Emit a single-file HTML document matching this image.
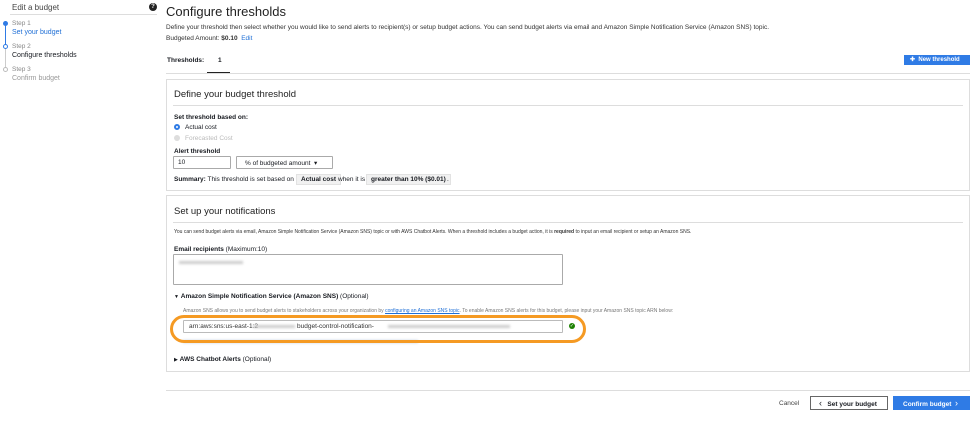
<!DOCTYPE html>
<html><head><style>
*{box-sizing:border-box;margin:0;padding:0}
body{width:977px;height:422px;background:#fff;font-family:"Liberation Sans",sans-serif;color:#16191f;position:relative;overflow:hidden}
.a{position:absolute;white-space:nowrap}
.s{font-size:6.5px}
.b{font-weight:bold}
.blue{color:#1f6fd6}
.grey{color:#888}
.panel{position:absolute;border:1px solid #ddd;background:#fff}
.rule{position:absolute;height:1px;background:#ddd}
.inp{position:absolute;border:1px solid #aaa;background:#fff;border-radius:1px}
.pill{position:absolute;background:#f1f1f1;border:1px solid #e2e2e2;font-weight:bold;font-size:6.5px;padding:1px 4px}
.blur{position:absolute;background:#ccc;filter:blur(1.2px);height:3px}
</style></head><body>
<!-- sidebar -->
<div class="a" style="left:12px;top:3px;font-size:8px;color:#444">Edit a budget</div>
<div class="a" style="left:149px;top:3px;width:8px;height:8px;border-radius:50%;background:#222;color:#fff;font-size:6px;text-align:center;line-height:8px;font-weight:bold">?</div>
<div class="rule" style="left:10px;top:14px;width:147px"></div>
<div class="a" style="left:5px;top:21px;width:1px;height:48px;background:#ccc"></div>
<div class="a" style="left:5px;top:21px;width:1px;height:25px;background:#2f7be5"></div>
<div class="a" style="left:3px;top:21px;width:5px;height:5px;border-radius:50%;background:#2f7be5"></div>
<div class="a" style="left:3px;top:44px;width:5px;height:5px;border-radius:50%;background:#fff;border:1px solid #2f7be5"></div>
<div class="a" style="left:3px;top:67px;width:5px;height:5px;border-radius:50%;background:#fff;border:1px solid #bbb"></div>
<div class="a s grey" style="left:12px;top:20px">Step 1</div>
<div class="a blue" style="left:12px;top:29px;font-size:7px">Set your budget</div>
<div class="a s grey" style="left:12px;top:43px">Step 2</div>
<div class="a" style="left:12px;top:52px;font-size:7px">Configure thresholds</div>
<div class="a s grey" style="left:12px;top:66px">Step 3</div>
<div class="a" style="left:12px;top:75px;font-size:7px;color:#999">Confirm budget</div>
<!-- main -->
<div class="a" style="left:166px;top:4px;font-size:13px;color:#222">Configure thresholds</div>
<div class="a s" style="left:166px;top:24px;color:#333">Define your threshold then select whether you would like to send alerts to recipient(s) or setup budget actions. You can send budget alerts via email and Amazon Simple Notification Service (Amazon SNS) topic.</div>
<div class="a s" style="left:166px;top:35px;color:#333">Budgeted Amount: <b>$0.10</b> &nbsp;<span class="blue">Edit</span></div>
<div class="a b s" style="left:167px;top:57px">Thresholds:</div>
<div class="a b s" style="left:218px;top:57px">1</div>
<div class="a" style="left:207px;top:72px;width:23px;height:1px;background:#222"></div>
<div class="rule" style="left:166px;top:73px;width:804px"></div>
<div class="a b" style="left:904px;top:55px;width:66px;height:10px;background:#2f7be5;color:#fff;font-size:6px;line-height:10px;padding-left:6px">✚&nbsp; New threshold</div>
<!-- panel1 -->
<div class="panel" style="left:166px;top:79px;width:804px;height:112px"></div>
<div class="a" style="left:174px;top:89px;font-size:9.5px;color:#222">Define your budget threshold</div>
<div class="rule" style="left:173px;top:105px;width:790px"></div>
<div class="a b s" style="left:174px;top:114px">Set threshold based on:</div>
<div class="a" style="left:174px;top:124px;width:6px;height:6px;border-radius:50%;border:2px solid #2f7be5"></div>
<div class="a s" style="left:185px;top:124px">Actual cost</div>
<div class="a" style="left:174px;top:135px;width:6px;height:6px;border-radius:50%;background:#ddd"></div>
<div class="a s" style="left:185px;top:135px;color:#bbb">Forecasted Cost</div>
<div class="a b s" style="left:174px;top:148px">Alert threshold</div>
<div class="inp" style="left:173px;top:156px;width:58px;height:13px"></div>
<div class="a s" style="left:178px;top:159px">10</div>
<div class="inp" style="left:236px;top:156px;width:97px;height:13px"></div>
<div class="a s" style="left:245px;top:159px">% of budgeted amount &nbsp;▾</div>
<div class="a s" style="left:174px;top:176px"><b>Summary:</b> This threshold is set based on</div>
<div class="pill" style="left:296px;top:174px">Actual cost</div>
<div class="a s" style="left:338px;top:176px">when it is</div>
<div class="pill" style="left:366px;top:174px">greater than 10% ($0.01)</div>
<div class="a s" style="left:447px;top:176px">.</div>
<!-- panel2 -->
<div class="panel" style="left:166px;top:195px;width:804px;height:177px"></div>
<div class="a" style="left:174px;top:206px;font-size:9.5px;color:#222">Set up your notifications</div>
<div class="rule" style="left:173px;top:222px;width:790px"></div>
<div class="a" style="left:174px;top:229px;font-size:5px;color:#333">You can send budget alerts via email, Amazon Simple Notification Service (Amazon SNS) topic or with AWS Chatbot Alerts. When a threshold includes a budget action, it is <b>required</b> to input an email recipient or setup an Amazon SNS.</div>
<div class="a s" style="left:174px;top:246px"><b>Email recipients</b> (Maximum:10)</div>
<div class="inp" style="left:173px;top:254px;width:390px;height:31px"></div>
<div class="blur" style="left:179px;top:261px;width:64px"></div>
<div class="a s" style="left:174px;top:293px"><span style="font-size:5px">▼</span> <b>Amazon Simple Notification Service (Amazon SNS)</b> (Optional)</div>
<div class="a" style="left:183px;top:308px;font-size:5px;color:#777">Amazon SNS allows you to send budget alerts to stakeholders across your organization by <span class="blue" style="text-decoration:underline">configuring an Amazon SNS topic</span>. To enable Amazon SNS alerts for this budget, please input your Amazon SNS topic ARN below:</div>
<div class="inp" style="left:183px;top:320px;width:380px;height:13px;border-color:#bbb"></div>
<div class="a s" style="left:189px;top:323px;color:#333">arn:aws:sns:us-east-1:2</div>
<div class="blur" style="left:253px;top:325px;width:42px"></div>
<div class="a s" style="left:297px;top:323px;color:#333">budget-control-notification-</div>
<div class="blur" style="left:388px;top:325px;width:122px"></div>
<div class="a" style="left:569px;top:323px;width:6px;height:6px;border-radius:50%;background:#1d8102;color:#fff;font-size:5px;line-height:6px;text-align:center">✓</div>
<div class="blur" style="left:183px;top:340px;width:235px;background:#c8d4e6"></div>
<div class="a" style="left:170px;top:315px;width:416px;height:28px;border:3px solid #f59a23;border-radius:14px"></div>
<div class="a s" style="left:174px;top:356px"><span style="font-size:5px">▶</span> <b>AWS Chatbot Alerts</b> (Optional)</div>
<!-- footer -->
<div class="rule" style="left:166px;top:390px;width:804px"></div>
<div class="a s" style="left:779px;top:400px;color:#444">Cancel</div>
<div class="a b s" style="left:810px;top:396px;width:78px;height:14px;border:1px solid #666;line-height:12px;padding-left:8px"><span style="font-size:9px;font-weight:normal">&lsaquo;</span>&nbsp;&nbsp; Set your budget</div>
<div class="a b s" style="left:893px;top:396px;width:77px;height:14px;background:#2f7be5;color:#fff;line-height:14px;padding-left:10px">Confirm budget &nbsp;<span style="font-size:9px;font-weight:normal">&rsaquo;</span></div>
</body></html>
